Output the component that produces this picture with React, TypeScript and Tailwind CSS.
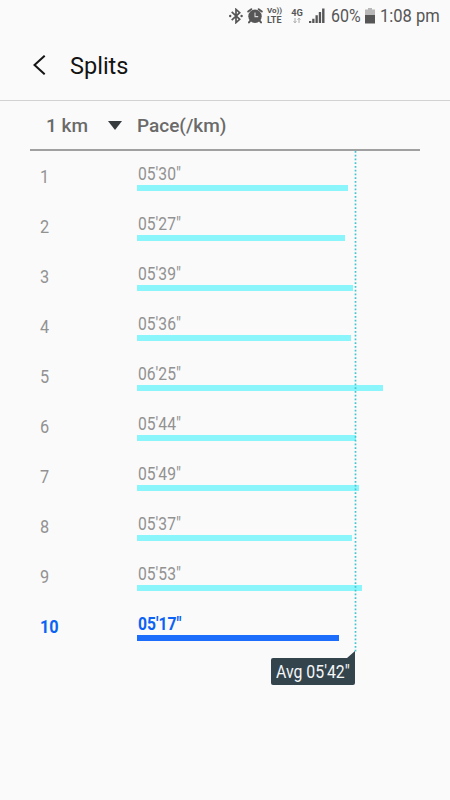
import React from 'react';

type Split = { km: number; pace: string; width: number; best?: boolean };

const splits: Split[] = [
  { km: 1, pace: `05'30"`, width: 210.5 },
  { km: 2, pace: `05'27"`, width: 208 },
  { km: 3, pace: `05'39"`, width: 216 },
  { km: 4, pace: `05'36"`, width: 214 },
  { km: 5, pace: `06'25"`, width: 245.5 },
  { km: 6, pace: `05'44"`, width: 219 },
  { km: 7, pace: `05'49"`, width: 222 },
  { km: 8, pace: `05'37"`, width: 215 },
  { km: 9, pace: `05'53"`, width: 225 },
  { km: 10, pace: `05'17"`, width: 202, best: true },
];

function BluetoothIcon() {
  return (
    <svg className="ml-[229px] mt-[8px] h-4 w-[14px] shrink-0" viewBox="0 0 14 16" fill="none" stroke="#565656" strokeWidth="1.7">
      <path d="M2.7 3.8 10.7 11.3 7 14.6V1.4L10.7 4.7 2.7 12.2" />
      <circle cx="1.2" cy="8" r="1.2" fill="#565656" stroke="none" />
      <circle cx="12.6" cy="8" r="1.2" fill="#565656" stroke="none" />
    </svg>
  );
}

function AlarmIcon() {
  return (
    <svg className="ml-[4px] mt-[8px] h-4 w-4 shrink-0" viewBox="0 0 16 16">
      <circle cx="8" cy="8.2" r="6.7" fill="#565656" />
      <path d="M1.2 3.6 4.3 1.2M11.7 1.2 14.8 3.6M3.6 12.4 2 14.4M12.4 12.4 14 14.4" stroke="#565656" strokeWidth="1.9" strokeLinecap="round" />
      <path d="M8 4.6V8.6H11.2" fill="none" stroke="#d8d8d8" strokeWidth="1.1" />
    </svg>
  );
}

function StatusBar() {
  return (
    <div className="flex h-8 items-start whitespace-nowrap text-[#565656]">
      <BluetoothIcon />
      <AlarmIcon />
      <div className="ml-[4px] mt-[7px] w-4 shrink-0 font-bold">
        <div className="text-[8px] leading-[8px]">Vo))</div>
        <div className="text-[9px] leading-[10px]">LTE</div>
      </div>
      <div className="ml-[8px] mt-[8px] flex w-[12px] shrink-0 flex-col items-center">
        <div className="text-[9.3px] leading-[9px] font-bold">4G</div>
        <svg className="mt-[1px] h-[5px] w-[8px]" viewBox="0 0 8 5" stroke="#a3a3a3" fill="none">
          <path d="M2 0V5M.5 3.2 2 4.7 3.5 3.2M6 5V0M4.5 1.8 6 .3 7.5 1.8" strokeWidth=".9" />
        </svg>
      </div>
      <svg className="ml-[6px] mt-[8px] h-[15px] w-4 shrink-0" viewBox="0 0 16 15" fill="#565656">
        <path d="M0 13h2.3v2H0zM3.2 10.7h2.3V15H3.2zM6.5 7.2h2.3V15H6.5zM9.8 4h2.3v11H9.8zM13.1.6h2.4V15h-2.4z" />
      </svg>
      <div className="ml-[5.5px] mt-[5px] w-[30.5px] shrink-0 text-[19px] leading-[22px]">
        <span className="inline-block origin-left scale-x-[0.84]">60%</span>
      </div>
      <svg className="ml-[4px] mt-[8px] h-4 w-[10px] shrink-0" viewBox="0 0 10 16">
        <path d="M3 0h4v1.5h3V7H0V1.5h3z" fill="#b8b8b8" />
        <path d="M0 7h10v8.5H0z" fill="#565656" />
      </svg>
      <div className="ml-[5px] mt-[5px] w-[64px] shrink-0 text-[19px] leading-[22px]">
        <span className="inline-block origin-left scale-x-[0.87]">1:08 pm</span>
      </div>
    </div>
  );
}

function SplitRow({ km, pace, width, best }: Split) {
  return (
    <div className={`flex h-[50px] ${best ? 'font-bold text-[#0b62f4]' : 'text-[#929292]'}`}>
      <div className="w-[97px] shrink-0 pl-[10px] pt-[14px] text-[18.5px] leading-[23px]">
        <span className="inline-block origin-left scale-x-[0.88]">{km}</span>
      </div>
      <div className="pl-[10px]">
        <div className="h-[33px] pl-[0.5px] pt-[11px] text-[18px] leading-[22px]">
          <span className="inline-block origin-left scale-x-[0.87]">{pace}</span>
        </div>
        <div className={`h-[6px] ${best ? 'bg-[#1c6dfc]' : 'bg-[#8af5fb]'}`} style={{ width }} />
      </div>
    </div>
  );
}

export default function App() {
  return (
    <div className="h-[800px] w-[450px] overflow-hidden bg-[#fafafa] font-['Roboto',sans-serif]">
      <StatusBar />
      <header className="flex h-[69px] items-center border-b border-[#d2d2d2]">
        <svg className="ml-[33px] mb-[2px] h-5 w-[13px]" viewBox="0 0 13 20" fill="none" stroke="#161616" strokeWidth="2">
          <path d="M11.7.7 1.5 10l10.2 9.3" />
        </svg>
        <h1 className="ml-[24px] text-[24px] leading-8 text-[#141414]"><span className="inline-block origin-left scale-x-[0.98]">Splits</span></h1>
      </header>
      <main className="relative ml-[30px] w-[390px]">
        <div className="flex h-[50px] items-center border-b-2 border-[#a0a0a0] text-[19px] font-medium text-[#6a6a6a]">
          <div className="w-[61px] pl-[16px] pt-[3px] whitespace-nowrap">1 km</div>
          <svg className="ml-[17px] h-[9px] w-[14px]" viewBox="0 0 14 9"><path d="M0 0h14L7 9z" fill="#353b3e" /></svg>
          <div className="ml-[15px] pt-[3px]">Pace(/km)</div>
        </div>
        <div className="pt-px">{splits.map((s) => <SplitRow key={s.km} {...s} />)}</div>
        <svg className="absolute left-[324px] top-[50px] h-[501px] w-[3px]" viewBox="0 0 3 501">
          <path d="M1.5 0V501" stroke="#43c5ce" strokeWidth="1.7" strokeDasharray="1.75 2" />
        </svg>
        <div className="absolute left-[241px] top-[550px] h-[35px] w-[85px] text-[#f5f7f8]">
          <svg className="absolute inset-0 h-full w-full" viewBox="0 0 85 35">
            <path d="M84 0V32q0 2-2 2H2q-2 0-2-2V9q0-2 2-2H76z" fill="#34444d" />
          </svg>
          <span className="absolute left-[5px] top-[9px] inline-block origin-left scale-x-[0.88] text-[18px] leading-[23px] whitespace-nowrap">Avg 05'42"</span>
        </div>
      </main>
    </div>
  );
}
